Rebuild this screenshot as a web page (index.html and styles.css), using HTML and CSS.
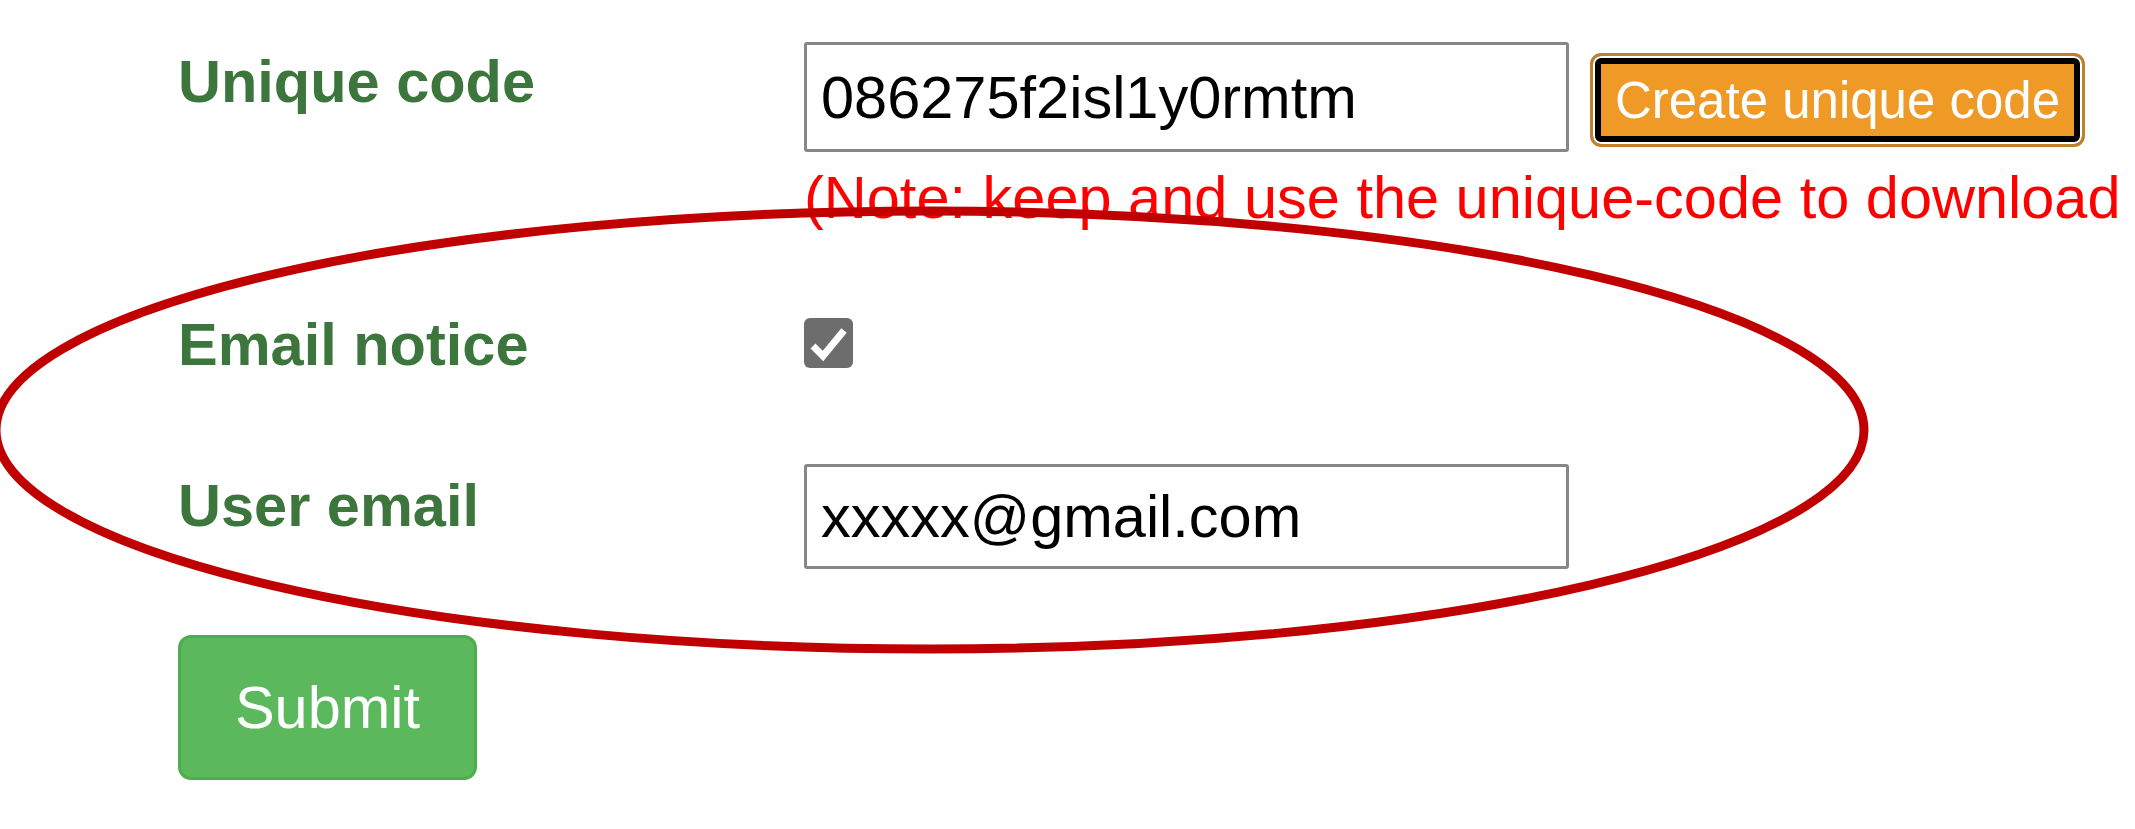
FILE: index.html
```html
<!DOCTYPE html>
<html lang="en">

<head>
  <meta charset="UTF-8" />
  <meta name="viewport" content="width=device-width, initial-scale=1.0" />
  <title>Unique code</title>
  <link rel="stylesheet" href="styles.css">
</head>

<body>
  <div class="page">
    <form class="form">
      <div class="row row-code">
        <label class="label" for="code">Unique code</label>
        <div class="field">
          <div class="code-line">
            <input class="text-input" id="code" type="text" value="086275f2isl1y0rmtm" />
            <button type="button" class="btn-create">Create unique code</button>
          </div>
          <p class="note">(Note: keep and use the unique-code to download</p>
        </div>
      </div>
      <div class="row row-notice">
        <label class="label">Email notice</label>
        <span class="check">
          <svg viewBox="0 0 49 50" width="49" height="50">
            <path d="M9 28 L19 38 L40 12.5" fill="none" stroke="#fff" stroke-width="7" />
          </svg>
        </span>
      </div>
      <div class="row row-email">
        <label class="label" for="email">User email</label>
        <input class="text-input" id="email" type="text" value="xxxxx@gmail.com" />
      </div>
      <button type="button" class="btn-submit">Submit</button>
    </form>
    <!-- annotation drawn over the form -->
    <svg class="mark" width="2135" height="829" viewBox="0 0 2135 829">
      <ellipse cx="930" cy="430" rx="934" ry="219" fill="none" stroke="#c00000" stroke-width="9" />
    </svg>
  </div>
</body>

</html>
```

FILE: styles.css
```css
* {
  padding: 0;
  margin: 0;
  box-sizing: border-box;
}

html,
body {
  overflow: hidden;
  background: #fff;
}

body {
  font-family: "Liberation Sans", Arial, sans-serif;
}

.page {
  position: relative;
  height: 829px;
}

.form {
  padding: 42px 0 0 178px;
}

.row {
  display: grid;
  grid-template-columns: 626px auto;
}

.label {
  font-size: 59.5px;
  font-weight: bold;
  line-height: 69px;
  color: #3c763d;
  padding-top: 5px;
}

.row-code {
  margin-bottom: 72px;
}

.row-notice {
  margin-bottom: 85px;
}

.row-notice .label {
  padding-top: 6px;
}

.row-email {
  margin-bottom: 66px;
}

.row-email .label {
  padding-top: 7px;
}

.code-line {
  display: flex;
  align-items: flex-start;
}

.text-input {
  width: 765px;
  height: 110px;
  padding: 0 14px;
  border: 3px solid #878787;
  border-radius: 3px;
  font-family: "Liberation Sans", Arial, sans-serif;
  font-size: 59.5px;
  color: #000;
  outline: none;
}

.row-email .text-input {
  height: 105px;
}

.btn-create {
  width: 495px;
  height: 94px;
  margin: 11px 0 0 21px;
  border: 3px solid #c0812f;
  border-radius: 11px;
  background: #ef9a26;
  box-shadow: inset 0 0 0 2px #fff, inset 0 0 0 8px #000;
  font-family: "Liberation Sans", Arial, sans-serif;
  font-size: 51px;
  color: #fff;
}

.note {
  margin-top: 11px;
  font-size: 59.5px;
  line-height: 69px;
  color: #f00;
  white-space: nowrap;
}

.check {
  display: block;
  width: 49px;
  height: 50px;
  margin-top: 14px;
  background: #6d6d6d;
  border-radius: 6px;
}

.check svg {
  display: block;
}

.btn-submit {
  width: 299px;
  height: 145px;
  border: 3px solid #4cae4c;
  border-radius: 13px;
  background: #5cb85c;
  font-family: "Liberation Sans", Arial, sans-serif;
  font-size: 59.5px;
  color: #fff;
}

.mark {
  position: absolute;
  top: 0;
  left: 0;
  pointer-events: none;
}
```
